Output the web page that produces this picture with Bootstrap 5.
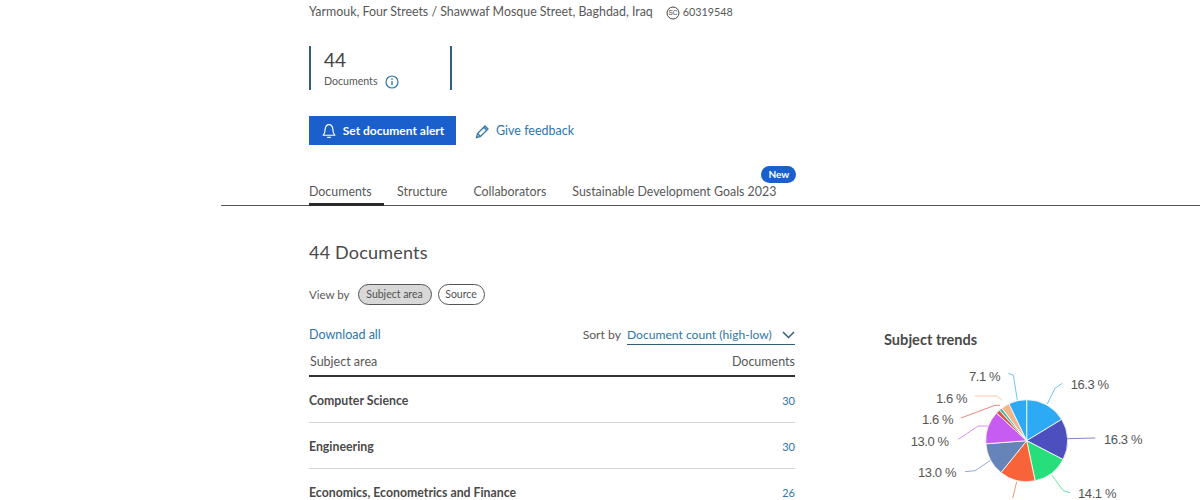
<!DOCTYPE html>
<html lang="en"><head><meta charset="utf-8"><title>Affiliation</title>
<link href="https://cdn.jsdelivr.net/npm/bootstrap@5.3.0/dist/css/bootstrap.min.css" rel="stylesheet">
<style>
html,body{height:500px;overflow:hidden}
body{font-family:"Lato","Noto Sans",sans-serif;font-size:12.5px;color:#585858;background:#fff}
.page-head,.page-body{padding-left:309px}
.addr-row{height:23px;padding-top:2px;font-size:12.4px}
.addr-id{font-size:10.8px}
.sc-ico{width:14px;height:14px;margin:0 3px 0 13px}
.metric-box{margin-top:23px;width:143px;height:44px;border-left:2px solid #2f5f7d;border-right:2px solid #2f5f7d;padding-left:13px}
.metric-num{font-size:19px;line-height:24px;color:#444;padding-top:2px}
.metric-lbl{font-size:10.6px;line-height:17px;padding-top:1px}
.action-row{margin-top:26px;height:29px}
.alert-btn{background:#1a5fcb;color:#fff;border:0;border-radius:0;font-size:12px;font-weight:700;height:29px;width:147px;padding:1px 0 0;gap:6px}
.alert-btn:hover{background:#1a5fcb;color:#fff}
.blue-link{color:#2f76ab;text-decoration:none}
.feedback-link{gap:6px;padding-top:1px;margin-left:19px}
.tab-bar{margin:21px 0 0 221px;padding-left:88px;height:40px;border-bottom:1px solid #555}
.tab-item{padding:17px 0 0;margin-right:26px;height:40px;position:relative;color:#585858;font-size:12.4px}
.tab-item.is-on{width:75px;margin-right:13px;border-bottom:3px solid #2b2b2b}
.new-tag{position:absolute;right:-20px;top:0;background:#1a5fcb;font-size:10px;font-weight:700;padding:0;width:35px;height:17px;line-height:17px}
.docs-title{font-size:18px;font-weight:400;color:#4a4a4a;margin:35px 0 0;line-height:22px;letter-spacing:.2px}
.view-row{margin-top:21px;height:21px;font-size:11.5px}
.pill-btn{font-size:10.5px;color:#505050;border:1px solid #555;border-radius:11px;height:21px;line-height:19px;background:#fff;text-align:center}
.pill-btn.is-on{background:#d8d8d8;width:74px}
.pill-src{width:47px;margin-left:2px}
.data-wrap{margin-top:20px}
.table-col{width:486px}
.tool-row{height:20px;line-height:20px}
.sort-gap{gap:6px;font-size:12.2px}
.sort-pick{width:168px;border-bottom:1px solid #2f5f7d;height:20px;font-size:12.1px}
.head-row{height:32px;border-bottom:2px solid #333;padding:0 0 3px 1px;font-size:12.5px}
.subject-row{height:46px;border-bottom:1px solid #d5d5d5;font-weight:700;font-size:12.3px;color:#4a4a4a;padding-top:3px}
.subject-row .blue-link{font-weight:400;font-size:11px}
.chart-col{margin-left:89px;width:300px;margin-right:-100px}
.chart-title{font-size:14.6px;font-weight:700;color:#4a4a4a;margin:0;padding-top:6px;line-height:18px}
.pie-svg{display:block;width:316px;height:140px;margin:11px 0 0 -24px}
.pie-svg text{font-family:"Liberation Sans",sans-serif;font-size:13px;letter-spacing:-.4px;fill:#555}
.pie-svg polyline{fill:none;stroke-width:1;stroke-opacity:.7}
.pie-svg path{stroke:#fff;stroke-width:.8}
</style></head><body>
<div class="page-head">
  <div class="addr-row d-flex align-items-center">
    <span>Yarmouk, Four Streets / Shawwaf Mosque Street, Baghdad, Iraq</span>
    <svg class="sc-ico" viewBox="0 0 14 14"><circle cx="7" cy="7" r="6" fill="none" stroke="#444" stroke-width="1"/><text x="7" y="9.2" font-size="6.5" text-anchor="middle" fill="#444" font-family="Liberation Sans">SC</text></svg>
    <span class="addr-id">60319548</span>
  </div>
  <div class="metric-box">
    <div class="metric-num">44</div>
    <div class="metric-lbl d-flex align-items-center gap-2">Documents
      <svg width="14" height="14" viewBox="0 0 14 14"><circle cx="7" cy="7" r="6" fill="none" stroke="#2f76ab" stroke-width="1.2"/><path d="M7 6v4.2M7 3.6v1.3" stroke="#2f76ab" stroke-width="1.3"/></svg>
    </div>
  </div>
  <div class="action-row d-flex align-items-center">
    <button class="btn alert-btn d-flex align-items-center justify-content-center">
      <svg width="16" height="16" viewBox="0 0 15 15"><path d="M2 11.500c1.400-1.300 1.700-2.600 1.800-5C4 3.600 5.400 1.500 7.500 1.500s3.500 2.100 3.700 5c.1 2.400.4 3.700 1.800 5zM5.800 13.500h3.400" fill="none" stroke="#fff" stroke-width="1.100" stroke-linejoin="round"/></svg>
      Set document alert
    </button>
    <a class="blue-link feedback-link d-flex align-items-center" href="#">
      <svg width="15" height="15" viewBox="0 0 15 15"><path d="M1.500 13.500l1-4L10 2l3 3-7.500 7.500zM2.500 9.500l3 3M8.800 3.200l3 3" fill="none" stroke="#2f76ab" stroke-width="1.300"/></svg>
      Give feedback
    </a>
  </div>
</div>
<div class="tab-bar nav">
  <div class="tab-item is-on">Documents</div>
  <div class="tab-item">Structure</div>
  <div class="tab-item">Collaborators</div>
  <div class="tab-item">Sustainable Development Goals 2023<span class="badge rounded-pill new-tag">New</span></div>
</div>
<div class="page-body">
  <h2 class="docs-title">44 Documents</h2>
  <div class="view-row d-flex align-items-center gap-1">
    <span class="me-1">View by</span>
    <span class="pill-btn is-on">Subject area</span>
    <span class="pill-btn pill-src">Source</span>
  </div>
  <div class="data-wrap d-flex">
    <div class="table-col">
      <div class="tool-row d-flex justify-content-between">
        <a class="blue-link" href="#">Download all</a>
        <div class="sort-gap d-flex"><span>Sort by</span>
          <div class="sort-pick d-flex justify-content-between align-items-center"><span class="blue-link">Document count (high-low)</span>
            <svg width="13" height="8" viewBox="0 0 13 8"><path d="M1 1l5.500 5.500L12 1" fill="none" stroke="#2f5f7d" stroke-width="1.500"/></svg>
          </div>
        </div>
      </div>
      <div class="head-row d-flex justify-content-between align-items-end"><span>Subject area</span><span>Documents</span></div>
      <div class="subject-row d-flex justify-content-between align-items-center"><span>Computer Science</span><a class="blue-link" href="#">30</a></div>
      <div class="subject-row d-flex justify-content-between align-items-center"><span>Engineering</span><a class="blue-link" href="#">30</a></div>
      <div class="subject-row d-flex justify-content-between align-items-center"><span>Economics, Econometrics and Finance</span><a class="blue-link" href="#">26</a></div>
    </div>
    <div class="chart-col">
      <h3 class="chart-title">Subject trends</h3>
      <svg class="pie-svg" viewBox="860 360 316 140">
        <g transform="translate(1026.7 440.7)">
          <path fill="#2eaaf5" d="M0 0V-41A41 41 0 0 1 35.03-21.31Z"/>
          <path fill="#4c4fbd" d="M0 0L35.03-21.31A41 41 0 0 1 36.42 18.84Z"/>
          <path fill="#27df7a" d="M0 0L36.42 18.84A41 41 0 0 1 8.44 40.12Z"/>
          <path fill="#f8633a" d="M0 0L8.44 40.12A41 41 0 0 1-25.74 31.92Z"/>
          <path fill="#6684b8" d="M0 0L-25.74 31.92A41 41 0 0 1-40.88 3.09Z"/>
          <path fill="#c75cf2" d="M0 0L-40.88 3.09A41 41 0 0 1-30.23-27.7Z"/>
          <path fill="#e0524a" d="M0 0L-30.23-27.7A41 41 0 0 1-27.3-30.59Z"/>
          <path fill="#3fb6a8" d="M0 0L-27.3-30.59A41 41 0 0 1-24.92-32.55Z"/>
          <path fill="#f4b48c" d="M0 0L-24.92-32.55A41 41 0 0 1-17.69-36.99Z"/>
          <path fill="#2eaaf5" d="M0 0L-17.69-36.99A41 41 0 0 1 0-41Z"/>
        </g>
        <polyline stroke="#2eaaf5" points="1047.300,404 1055,388.300 1062.300,383.300"/>
        <polyline stroke="#4c4fbd" points="1067.300,438.700 1095.300,438"/>
        <polyline stroke="#27df7a" points="1051.700,475 1063.300,490.700 1070,492.700"/>
        <polyline stroke="#f8633a" points="1016.700,481.700 1012.700,498.300"/>
        <polyline stroke="#6684b8" points="990,460.700 975,470.700 965,471.700"/>
        <polyline stroke="#c75cf2" points="987.700,426 978.300,426 958.300,439.300"/>
        <polyline stroke="#e0524a" points="1000,405.300 995,405.300 961,418"/>
        <polyline stroke="#f4b48c" points="1001.700,400 996.700,396 975,396"/>
        <polyline stroke="#2eaaf5" points="1017.300,400 1013.300,375 1008.300,373.300"/>
        <text x="1070.700" y="389">16.3 %</text>
        <text x="1104" y="444">16.3 %</text>
        <text x="1078" y="498">14.1 %</text>
        <text x="960" y="510">14.1 %</text>
        <text x="918" y="477">13.0 %</text>
        <text x="910.700" y="446">13.0 %</text>
        <text x="922" y="424">1.6 %</text>
        <text x="936" y="402.700">1.6 %</text>
        <text x="969" y="380.700">7.1 %</text>
      </svg>
    </div>
  </div>
</div>
<script src="https://cdn.jsdelivr.net/npm/bootstrap@5.3.0/dist/js/bootstrap.bundle.min.js"></script>
</body></html>
